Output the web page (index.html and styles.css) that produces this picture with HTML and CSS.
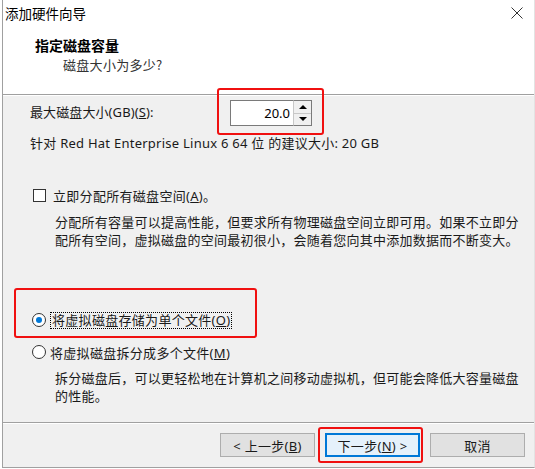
FILE: index.html
```html
<!DOCTYPE html>
<html lang="zh-CN">
<head>
    <meta charset="UTF-8">
    <title>添加硬件向导</title>
    <link rel="stylesheet" href="styles.css">
</head>
<body>
    <div class="window">
        <div class="titlebar">
            <span class="title">添加硬件向导</span>
            <svg class="close" width="12" height="12" viewBox="0 0 12 12">
                <path d="M0.5 0.5 L11.5 11.5 M11.5 0.5 L0.5 11.5" stroke="#333" stroke-width="1" fill="none"/>
            </svg>
        </div>

        <div class="header">
            <h1>指定磁盘容量</h1>
            <p>磁盘大小为多少?</p>
        </div>

        <div class="content">
            <div class="size-row">
                <label>最大磁盘大小(GB)(<u>S</u>):</label>
                <div class="spin">
                    <div class="field">20.0</div>
                    <div class="arrows">
                        <span class="up"></span>
                        <span class="down"></span>
                    </div>
                </div>
            </div>
            <p class="hint">针对 Red Hat Enterprise Linux 6 64 位 的建议大小: 20 GB</p>

            <div class="option check-row">
                <span class="checkbox"></span>
                <span>立即分配所有磁盘空间(<u>A</u>)。</span>
            </div>
            <p class="desc">分配所有容量可以提高性能，但要求所有物理磁盘空间立即可用。如果不立即分<br>配所有空间，虚拟磁盘的空间最初很小，会随着您向其中添加数据而不断变大。</p>

            <div class="option radio-one">
                <span class="radio checked"></span>
                <span class="focus">将虚拟磁盘存储为单个文件(<u>O</u>)</span>
            </div>
            <div class="option radio-two">
                <span class="radio"></span>
                <span>将虚拟磁盘拆分成多个文件(<u>M</u>)</span>
            </div>
            <p class="desc desc-two">拆分磁盘后，可以更轻松地在计算机之间移动虚拟机，但可能会降低大容量磁盘<br>的性能。</p>
        </div>

        <div class="footer">
            <button>&lt; 上一步(<u>B</u>)</button>
            <button class="default">下一步(<u>N</u>) &gt;</button>
            <button>取消</button>
        </div>

        <!-- annotation boxes drawn over the dialog -->
        <div class="mark mark-size"></div>
        <div class="mark mark-single"></div>
        <div class="mark mark-next"></div>
    </div>
</body>
</html>
```

FILE: styles.css
```css
/* Global Styles */
* {
    margin: 0;
    padding: 0;
    box-sizing: border-box;
}

body {
    background-color: #fff;
    font-family: 'Noto Sans', 'Noto Sans CJK SC', sans-serif;
    font-size: 12px;
    color: #1a1a1a;
}

.window {
    position: relative;
    display: flex;
    flex-direction: column;
    width: 533px;
    height: 468px;
    margin-left: 2px;
    background-color: #f0f0f0;
    border-left: 1px solid #a0a0a0;
    border-right: 1px solid #e3e3e3;
    border-bottom: 1px solid #a0a0a0;
}

/* Title bar */
.titlebar {
    display: flex;
    justify-content: space-between;
    align-items: center;
    height: 28px;
    padding: 0 11px 2px 2px;
    background-color: #fff;
}

.titlebar .title {
    font-family: 'Noto Sans CJK SC', sans-serif;
    font-size: 13.5px;
    color: #000;
}

/* Header */
.header {
    height: 67px;
    padding: 8px 0 0 32px;
    background-color: #fff;
    border-bottom: 1px solid #a0a0a0;
    box-shadow: 0 1px 0 #fff;
}

.header h1 {
    font-family: 'Noto Sans CJK SC', sans-serif;
    font-size: 14px;
    font-weight: bold;
    line-height: 18px;
    color: #000;
}

.header p {
    margin: 2px 0 0 28px;
    font-family: 'Noto Sans CJK SC', sans-serif;
    font-size: 13px;
    letter-spacing: 0.3px;
    line-height: 18px;
    color: #333;
}

/* Content */
.content {
    flex: 1;
    padding-left: 27px;
}

.size-row {
    display: flex;
    align-items: center;
    margin-top: 5px;
    height: 26px;
}

.size-row label {
    width: 200px;
    font-size: 13px;
    letter-spacing: 0.1px;
    padding-bottom: 3px;
}

.spin {
    display: flex;
    height: 26px;
}

.spin .field {
    width: 63px;
    height: 26px;
    padding-right: 3px;
    background-color: #fff;
    border: 1px solid #7a7a7a;
    border-right: none;
    text-align: right;
    font-size: 13px;
    line-height: 24px;
    color: #000;
}

.spin .arrows {
    display: flex;
    flex-direction: column;
    width: 19px;
    border: 1px solid #7a7a7a;
    border-left: 1px solid #c8c8c8;
}

.spin .arrows span {
    flex: 1;
    display: flex;
    justify-content: center;
    align-items: center;
    background-color: #f0f0f0;
}

.spin .arrows .up {
    border-bottom: 1px solid #c8c8c8;
}

.spin .arrows .up::after,
.spin .arrows .down::after {
    content: '';
    border-left: 4px solid transparent;
    border-right: 4px solid transparent;
}

.spin .arrows .up::after {
    border-bottom: 4px solid #000;
}

.spin .arrows .down::after {
    border-top: 4px solid #000;
}

.hint {
    margin-top: 8px;
    font-size: 13px;
    letter-spacing: 0.25px;
    line-height: 18px;
}

.option {
    display: flex;
    align-items: center;
    height: 18px;
    font-size: 13px;
    letter-spacing: 0.3px;
}

.check-row {
    margin-top: 34px;
}

.checkbox {
    width: 13px;
    height: 13px;
    margin: 0 7px 0 3px;
    background-color: #fff;
    border: 1px solid #333;
}

.radio {
    position: relative;
    width: 14px;
    height: 14px;
    margin: 0 4px 0 2px;
    background-color: #fff;
    border: 1px solid #333;
    border-radius: 50%;
}

.radio.checked::after {
    content: '';
    position: absolute;
    top: 3px;
    left: 3px;
    width: 6px;
    height: 6px;
    background-color: #0078d7;
    border-radius: 50%;
}

.focus {
    padding: 0 1px;
    line-height: 15px;
    border: 1px dotted #000;
}

.desc {
    margin: 9px 0 0 25px;
    font-size: 13px;
    letter-spacing: 0.25px;
    line-height: 18px;
    white-space: nowrap;
}

.radio-one {
    margin-top: 62px;
}

.radio-two {
    margin-top: 14px;
}

.desc-two {
    margin-top: 8px;
}

/* Footer buttons */
.footer {
    display: flex;
    justify-content: flex-end;
    gap: 10px;
    height: 45px;
    padding: 10px 9px 0 0;
    border-top: 1px solid #a0a0a0;
    box-shadow: inset 0 1px 0 #fff;
}

.footer button {
    width: 95px;
    height: 24px;
    background-color: #e1e1e1;
    border: 1px solid #adadad;
    font-family: 'Noto Sans', 'Noto Sans CJK SC', sans-serif;
    font-size: 13px;
    letter-spacing: 0.3px;
    color: #1a1a1a;
}

.footer button.default {
    border: 1px solid #0078d7;
    box-shadow: inset 0 0 0 1px #0078d7;
    background-color: #e5f1fb;
}

/* Red annotation frames */
.mark {
    position: absolute;
    border: 2px solid #f01010;
    border-radius: 3px;
}

.mark-size {
    left: 214px;
    top: 88px;
    width: 107px;
    height: 47px;
}

.mark-single {
    left: 11px;
    top: 288px;
    width: 243px;
    height: 50px;
}

.mark-next {
    left: 315px;
    top: 427px;
    width: 105px;
    height: 36px;
}
```
